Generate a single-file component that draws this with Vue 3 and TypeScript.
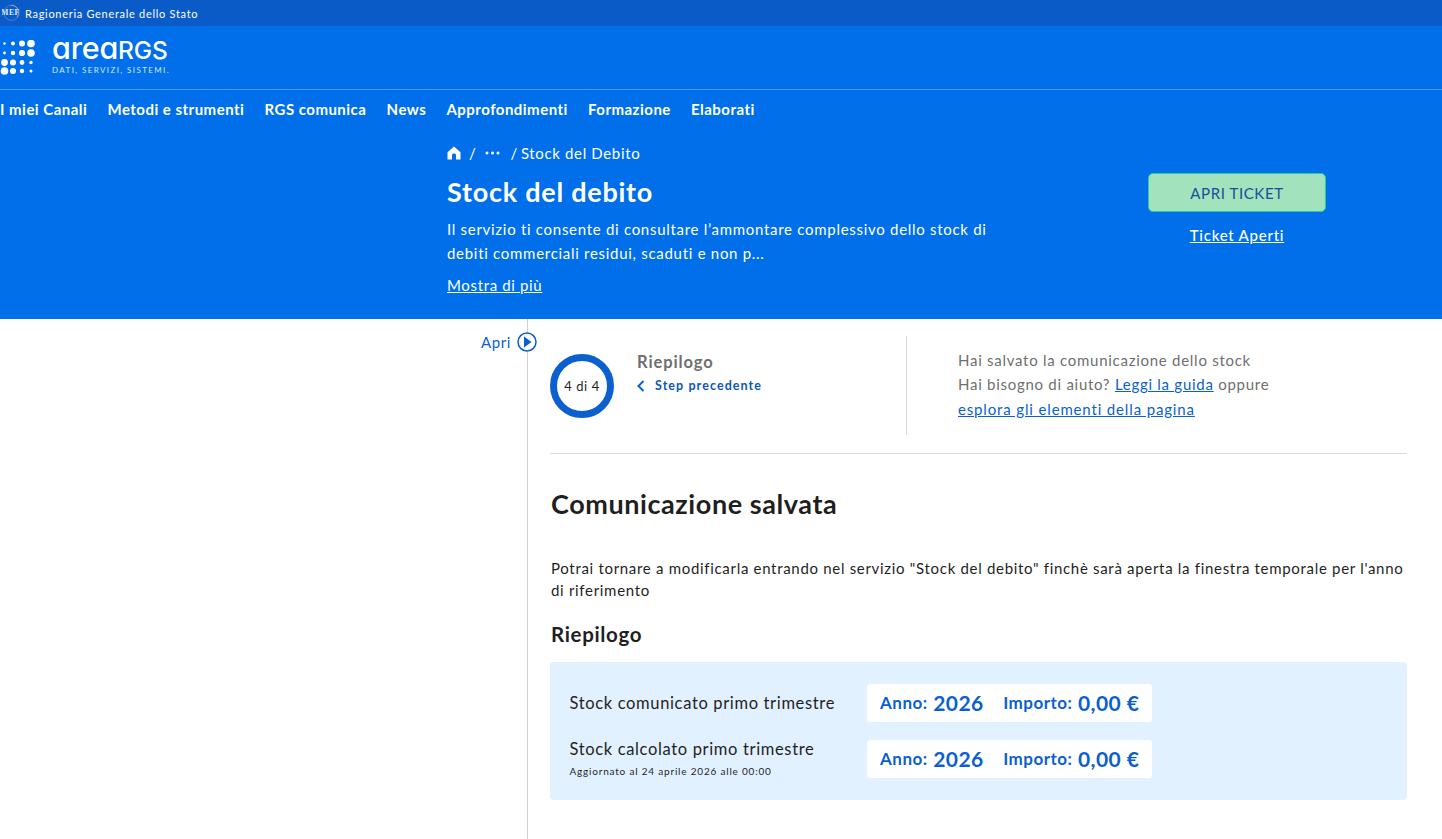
<script setup lang="ts">
const navItems: string[] = ['I miei Canali', 'Metodi e strumenti', 'RGS comunica', 'News', 'Approfondimenti', 'Formazione', 'Elaborati']
const rows = [
  { label: 'Stock comunicato primo trimestre', note: '' },
  { label: 'Stock calcolato primo trimestre', note: 'Aggiornato al 24 aprile 2026 alle 00:00' },
]
const dots: [number, number, number][] = [
  [4.5,3.5,1.2],[13,3.5,2],[22,3.5,3],[31,3.5,3.8],
  [4.5,13,1.4],[13,13,2.2],[22,13,3.1],[31,13,3.8],
  [4.5,22.5,3.4],[13,22.5,3],[22,22.5,2.4],[31,22.5,1.7],
  [4.5,31,3.8],[13,31,3],[22,31,2.2],[31,31,1.5],
]
</script>

<template>
  <div class="page">
    <div class="topbar">
      <svg class="mef" width="18" height="18" viewBox="0 0 18 18">
        <path d="M9 1.2 A7.6 7.6 0 0 1 15 13.5" fill="none" stroke="#c9a95a" stroke-width="0.8" />
        <circle cx="9.5" cy="8.8" r="7.6" fill="none" stroke="#7fa6dc" stroke-width="0.5" />
        <text x="8.5" y="11" text-anchor="middle" font-size="7.5" font-weight="700" fill="#dfeaff" font-family="Liberation Serif, serif">MEF</text>
      </svg>
      <span>Ragioneria Generale dello Stato</span>
    </div>
    <header class="hero">
      <div class="brand">
        <svg width="36" height="36" viewBox="0 0 36 36"><circle v-for="(d, i) in dots" :key="i" :cx="d[0]" :cy="d[1]" :r="d[2]" fill="#fff" /></svg>
        <div class="brand-text">
          <div class="logo">area<span>RGS</span></div>
          <div class="tag">DATI, SERVIZI, SISTEMI.</div>
        </div>
      </div>
      <nav class="nav"><a v-for="n in navItems" :key="n">{{ n }}</a></nav>
      <div class="intro">
        <div class="intro-main">
          <div class="crumbs">
            <svg width="14" height="14" viewBox="0 0 14 14"><path d="M7 0.5 L13.5 6.2 V13.5 H9 V9 Q9 7.6 7 7.6 Q5 7.6 5 9 V13.5 H0.5 V6.2 Z" fill="#fff" /></svg>
            <span class="sl1">/</span>
            <svg class="more" width="15" height="4" viewBox="0 0 15 4"><circle cx="2" cy="2" r="1.5" fill="#fff" /><circle cx="7.5" cy="2" r="1.5" fill="#fff" /><circle cx="13" cy="2" r="1.5" fill="#fff" /></svg>
            <span class="sl2">/</span>
            <span class="cur">Stock del Debito</span>
          </div>
          <h1>Stock del debito</h1>
          <p>Il servizio ti consente di consultare l’ammontare complessivo dello stock di<br />debiti commerciali residui, scaduti e non p...</p>
          <a class="more-link">Mostra di più</a>
        </div>
        <div class="intro-side">
          <button class="ticket" type="button">APRI TICKET</button>
          <a class="open-link">Ticket Aperti</a>
        </div>
      </div>
    </header>
    <div class="body">
      <aside class="side">
        <span>Apri</span>
        <svg width="20" height="20" viewBox="0 0 20 20"><circle cx="10" cy="10" r="9" fill="#fff" stroke="#0b5fce" stroke-width="1.5" /><path d="M7 4.5 L14.5 10 L7 15.5 Z" fill="#0b5fce" /></svg>
      </aside>
      <main class="content">
        <section class="status">
          <div class="ring">4 di 4</div>
          <div class="step">
            <div class="step-title">Riepilogo</div>
            <a class="step-back">
              <svg width="8" height="12" viewBox="0 0 8 12"><path d="M6.5 1 L1.5 6 L6.5 11" fill="none" stroke="#0b5fce" stroke-width="2" /></svg>
              <span>Step precedente</span>
            </a>
          </div>
          <div class="help">
            <div>Hai salvato la comunicazione dello stock</div>
            <div>Hai bisogno di aiuto? <a>Leggi la guida</a> oppure</div>
            <div class="help-last"><a>esplora gli elementi della pagina</a></div>
          </div>
        </section>
        <h2>Comunicazione salvata</h2>
        <p class="lead">Potrai tornare a modificarla entrando nel servizio "Stock del debito" finchè sarà aperta la finestra temporale per l'anno di riferimento</p>
        <h3>Riepilogo</h3>
        <section class="panel">
          <div v-for="r in rows" :key="r.label" class="row">
            <div class="row-label">
              <div>{{ r.label }}</div>
              <small v-if="r.note">{{ r.note }}</small>
            </div>
            <div class="values">
              <span class="k">Anno:</span><span class="v">2026</span>
              <span class="k second">Importo:</span><span class="v">0,00 €</span>
            </div>
          </div>
        </section>
      </main>
    </div>
  </div>
</template>

<style>
html, body { margin: 0; background: #fff; overflow-x: hidden; }
</style>

<style scoped>
.page { font-family: Lato, "Noto Sans", sans-serif; color: #1f1f1f; height: 839px; overflow: hidden; }
.topbar { height: 26px; background: #0a5bc8; color: #fff; display: flex; align-items: center; gap: 5px; padding-left: 2px; font-size: 11px; letter-spacing: 0.7px; }
.mef { flex: none; }
.hero { height: 293px; background: #006fe9; color: #fff; }
.brand { height: 63px; border-bottom: 1px solid #4d9bf3; display: flex; align-items: center; gap: 16px; }
.brand-text { margin-top: -3px; }
.logo { font-family: Inter, "Noto Sans", sans-serif; font-feature-settings: "cv11" 1; font-size: 30.5px; line-height: 24px; letter-spacing: -0.2px; font-weight: 500; height: 24px; }
.logo span { font-size: 24.5px; letter-spacing: -0.1px; }
.tag { font-size: 8px; line-height: 11px; letter-spacing: 1.4px; color: #d5e7ff; margin-top: 5px; }
.nav { height: 40px; margin-top: -1px; padding-bottom: 1px; display: flex; align-items: center; gap: 20.2px; font-size: 15px; font-weight: 700; letter-spacing: 0.48px; }
.intro { display: flex; padding-left: 447px; }
.intro-main { width: 560px; }
.crumbs { display: flex; align-items: center; height: 20px; margin-top: 13px; font-size: 15px; letter-spacing: 0.65px; }
.sl1 { margin-left: 8px; }
.crumbs .more { margin-left: 9px; }
.sl2 { margin-left: 10px; }
.cur { margin-left: 3px; }
h1 { margin: 10px 0 0; font-size: 27px; line-height: 38px; letter-spacing: 0.75px; font-weight: 700; }
.intro-main p { margin: 6px 0 0; font-size: 15px; line-height: 24px; letter-spacing: 0.71px; }
.more-link { display: inline-block; margin-top: 8px; font-size: 15px; line-height: 24px; letter-spacing: 0.65px; text-decoration: underline; }
.intro-side { margin-left: 141px; width: 178px; margin-top: 43px; display: flex; flex-direction: column; align-items: center; }
.ticket { width: 178px; height: 39px; border: 1px solid #2fcb9c; border-radius: 5px; background: #a2e2bc; color: #174f9c; font-family: inherit; font-size: 15px; letter-spacing: 0.6px; }
.open-link { margin-top: 11px; font-size: 15px; line-height: 24px; letter-spacing: 0.75px; font-weight: 500; text-decoration: underline; }
.body { display: flex; height: 520px; }
.side { width: 528px; height: 100%; box-sizing: border-box; border-right: 1px solid #cfd3d8; display: flex; justify-content: flex-end; align-items: flex-start; gap: 6px; color: #0b5fce; font-size: 15px; letter-spacing: 0.6px; padding-top: 13px; line-height: 20px; }
.side svg { margin-right: -10px; flex: none; }
.content { width: 857px; margin-left: 22px; }
.status { display: flex; height: 135px; border-bottom: 1px solid #d9dcdf; padding-top: 17px; box-sizing: border-box; }
.ring { width: 64px; height: 64px; box-sizing: border-box; border: 7px solid #0b5fce; border-radius: 50%; display: flex; align-items: center; justify-content: center; font-size: 13px; margin-top: 18px; letter-spacing: 0.55px; }
.step { width: 270px; margin-left: 23px; padding-top: 15px; border-right: 1px solid #d9dcdf; height: 99px; box-sizing: border-box; }
.step-title { font-size: 16.5px; font-weight: 700; line-height: 22px; letter-spacing: 0.9px; color: #6f6f6f; }
.step-back { display: flex; align-items: center; gap: 10px; margin-top: 3px; line-height: 20px; font-size: 12.5px; font-weight: 700; letter-spacing: 1.08px; color: #0b58b8; }
.help { margin-left: 51px; padding-top: 12px; font-size: 15px; line-height: 24px; letter-spacing: 0.73px; color: #6f6f6f; }
.help-last { margin-top: 1px; letter-spacing: 0.85px; }
.help a { color: #0b5fce; text-decoration: underline; }
h2 { margin: 33px 0 0 1px; font-size: 27px; line-height: 34px; font-weight: 700; letter-spacing: 0.58px; color: #1f1f1f; }
.lead { margin: 36px 0 0 1px; font-size: 15px; line-height: 22px; letter-spacing: 0.69px; color: #1f1f1f; }
h3 { margin: 20px 0 0 1px; font-size: 20.5px; line-height: 26px; font-weight: 700; letter-spacing: 0.65px; }
.panel { margin-top: 15px; height: 138px; box-sizing: border-box; background: #e2f1ff; border-radius: 4px; padding: 22px 0 0 19.5px; display: flex; flex-direction: column; gap: 18px; }
.row { display: flex; align-items: center; height: 38px; }
.row-label { width: 297.5px; font-size: 16.5px; line-height: 20px; letter-spacing: 0.65px; color: #1f1f1f; }
.row-label small { display: block; margin-top: 4px; font-size: 10px; line-height: 16px; letter-spacing: 0.8px; }
.values { width: 285px; height: 38px; box-sizing: border-box; background: #fff; border-radius: 3px; padding: 0 0 1px 13px; display: flex; align-items: center; color: #0b5fce; font-weight: 700; }
.k { font-size: 17px; letter-spacing: 0.5px; margin-right: 5.5px; }
.v { font-size: 21px; letter-spacing: 0.45px; }
.second { margin-left: 19.5px; }
</style>
